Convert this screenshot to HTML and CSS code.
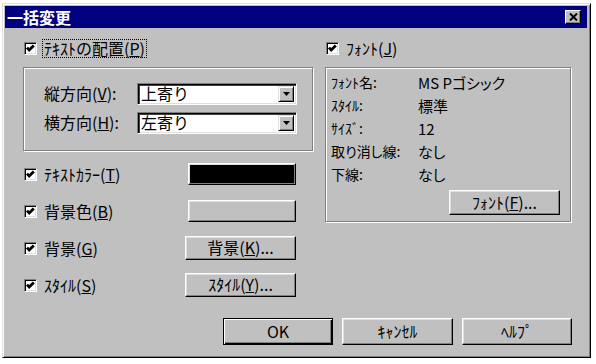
FILE: index.html
```html
<!DOCTYPE html>
<html lang="ja">
<head>
  <meta charset="UTF-8" />
  <title>一括変更</title>
  <link rel="stylesheet" href="styles.css">
</head>
<body>
  <div class="window">
    <div class="titlebar">
      <span class="title">一括変更</span>
      <span class="close">
        <svg width="9" height="8" viewBox="0 0 9 8"><path d="M1 0.5 L8 7.5 M8 0.5 L1 7.5" stroke="#000" stroke-width="2" fill="none"/></svg>
      </span>
    </div>

    <div class="content">
      <div class="columns">
        <div class="col">
          <div class="check-row">
            <span class="cb"><svg width="11" height="11" viewBox="0 0 11 11"><polyline points="2,4.6 4.2,7 8.8,2.4" stroke="#000" stroke-width="2.8" fill="none"/></svg></span>
            <span class="cb-label focus">ﾃｷｽﾄの配置(<u>P</u>)</span>
          </div>

          <div class="group align-group">
            <div class="field">
              <span class="field-label">縦方向(<u>V</u>):</span>
              <div class="combo">
                <span class="combo-value">上寄り</span>
                <span class="combo-btn"><svg width="7" height="4" viewBox="0 0 7 4"><path d="M0 0 H7 L3.5 4 Z" fill="#000"/></svg></span>
              </div>
            </div>
            <div class="field">
              <span class="field-label">横方向(<u>H</u>):</span>
              <div class="combo">
                <span class="combo-value">左寄り</span>
                <span class="combo-btn"><svg width="7" height="4" viewBox="0 0 7 4"><path d="M0 0 H7 L3.5 4 Z" fill="#000"/></svg></span>
              </div>
            </div>
          </div>

          <div class="opt-row first">
            <div class="check-row">
              <span class="cb"><svg width="11" height="11" viewBox="0 0 11 11"><polyline points="2,4.6 4.2,7 8.8,2.4" stroke="#000" stroke-width="2.8" fill="none"/></svg></span>
              <span class="cb-label">ﾃｷｽﾄｶﾗｰ(<u>T</u>)</span>
            </div>
            <span class="swatch swatch-black"></span>
          </div>
          <div class="opt-row">
            <div class="check-row">
              <span class="cb"><svg width="11" height="11" viewBox="0 0 11 11"><polyline points="2,4.6 4.2,7 8.8,2.4" stroke="#000" stroke-width="2.8" fill="none"/></svg></span>
              <span class="cb-label">背景色(<u>B</u>)</span>
            </div>
            <span class="swatch"></span>
          </div>
          <div class="opt-row">
            <div class="check-row">
              <span class="cb"><svg width="11" height="11" viewBox="0 0 11 11"><polyline points="2,4.6 4.2,7 8.8,2.4" stroke="#000" stroke-width="2.8" fill="none"/></svg></span>
              <span class="cb-label">背景(<u>G</u>)</span>
            </div>
            <button class="btn btn-side">背景(<u>K</u>)...</button>
          </div>
          <div class="opt-row">
            <div class="check-row">
              <span class="cb"><svg width="11" height="11" viewBox="0 0 11 11"><polyline points="2,4.6 4.2,7 8.8,2.4" stroke="#000" stroke-width="2.8" fill="none"/></svg></span>
              <span class="cb-label">ｽﾀｲﾙ(<u>S</u>)</span>
            </div>
            <button class="btn btn-side">ｽﾀｲﾙ(<u>Y</u>)...</button>
          </div>
        </div>

        <div class="col">
          <div class="check-row">
            <span class="cb"><svg width="11" height="11" viewBox="0 0 11 11"><polyline points="2,4.6 4.2,7 8.8,2.4" stroke="#000" stroke-width="2.8" fill="none"/></svg></span>
            <span class="cb-label">ﾌｫﾝﾄ(<u>J</u>)</span>
          </div>

          <div class="group font-group">
            <div class="font-info">
              <span>ﾌｫﾝﾄ名:</span><span class="font-name">MS Pゴシック</span>
              <span>ｽﾀｲﾙ:</span><span class="font-value">標準</span>
              <span>ｻｲｽﾞ:</span><span class="font-value">12</span>
              <span>取り消し線:</span><span class="font-value">なし</span>
              <span>下線:</span><span class="font-value">なし</span>
            </div>
            <div class="font-actions">
              <button class="btn btn-side">ﾌｫﾝﾄ(<u>F</u>)...</button>
            </div>
          </div>
        </div>
      </div>

      <div class="buttons">
        <button class="btn btn-main btn-default">OK</button>
        <button class="btn btn-main btn-wide">ｷｬﾝｾﾙ</button>
        <button class="btn btn-main">ﾍﾙﾌﾟ</button>
      </div>
    </div>
  </div>
</body>
</html>
```

FILE: styles.css
```css
body {
  margin: 0;
  background: #fff;
  font-family: "Noto Sans CJK JP", "Liberation Sans", sans-serif;
  font-size: 16px;
  line-height: 1.2;
  color: #000;
}

u {
  text-underline-offset: 1px;
}

.window {
  box-sizing: border-box;
  width: 589px;
  height: 355px;
  margin: 3px 0 0 2px;
  padding: 2px 3px 3px 2px;
  background: #c0c0c0;
  border: 1px solid;
  border-color: #dfdfdf #000 #000 #dfdfdf;
  box-shadow: inset 1px 1px #fff, inset -1px -1px #808080;
  display: flex;
  flex-direction: column;
}

.titlebar {
  height: 22px;
  background: #000080;
  color: #fff;
  display: flex;
  align-items: center;
  justify-content: space-between;
  padding: 0 6px 0 2px;
}

.title {
  font-size: 16px;
  font-weight: bold;
  line-height: 1;
}

.close {
  box-sizing: border-box;
  width: 16px;
  height: 14px;
  background: #c0c0c0;
  border: 1px solid;
  border-color: #fff #000 #000 #fff;
  box-shadow: inset -1px -1px #808080;
  display: flex;
  align-items: center;
  justify-content: center;
}

.content {
  flex: 1;
  padding: 12px 15px 9px 18px;
  display: flex;
  flex-direction: column;
}

.columns {
  display: grid;
  grid-template-columns: 290px 246px;
  column-gap: 12px;
}

.col {
  display: flex;
  flex-direction: column;
}

.check-row {
  display: flex;
  align-items: center;
  height: 17px;
  padding-left: 1px;
}

.cb {
  box-sizing: border-box;
  width: 13px;
  height: 13px;
  background: #fff;
  border: 1px solid;
  border-color: #808080 #fff #fff #808080;
  box-shadow: inset 1px 1px #000, inset -1px -1px #dfdfdf;
  display: flex;
  flex-shrink: 0;
}

.cb-label {
  margin-left: 7px;
  line-height: 17px;
  white-space: nowrap;
}

.focus {
  margin-left: 6px;
  padding: 0 1px;
  outline: 1px dotted #000;
}

.group {
  margin-top: 10px;
  box-sizing: border-box;
  border: 1px solid #808080;
  box-shadow: inset 1px 1px #fff, 1px 1px #fff;
}

.align-group {
  height: 84px;
  padding: 15px 0 0 20px;
  display: flex;
  flex-direction: column;
  gap: 7px;
}

.field {
  display: flex;
  align-items: center;
}

.field-label {
  width: 93px;
  white-space: nowrap;
}

.combo {
  box-sizing: border-box;
  width: 160px;
  height: 22px;
  padding: 2px;
  background: #fff;
  border: 1px solid;
  border-color: #808080 #fff #fff #808080;
  box-shadow: inset 1px 1px #000, inset 2px 2px #404040, inset -1px -1px #dfdfdf;
  display: flex;
  align-items: center;
  justify-content: space-between;
}

.combo-value {
  padding-left: 1px;
}

.combo-btn {
  box-sizing: border-box;
  width: 16px;
  height: 16px;
  background: #c0c0c0;
  border: 1px solid;
  border-color: #dfdfdf #000 #000 #dfdfdf;
  box-shadow: inset 1px 1px #fff, inset -1px -1px #808080;
  display: flex;
  align-items: center;
  justify-content: center;
}

.opt-row {
  height: 24px;
  margin-top: 13px;
  padding-right: 17px;
  display: flex;
  align-items: center;
  justify-content: space-between;
}

.opt-row.first {
  margin-top: 11px;
}

.swatch {
  box-sizing: border-box;
  width: 108px;
  height: 22px;
  background: #c0c0c0;
  border: 1px solid;
  border-color: #fff #000 #000 #fff;
  box-shadow: inset -1px -1px #808080, inset 1px 1px #dfdfdf;
}

.swatch-black {
  background: #000;
  box-shadow: inset -1px -1px #808080, inset 1px 1px #dfdfdf, inset 2px 2px #000;
}

.btn {
  box-sizing: border-box;
  margin: 0;
  padding: 0;
  background: #c0c0c0;
  border: 1px solid;
  border-color: #fff #000 #000 #fff;
  box-shadow: inset -1px -1px #808080, inset 1px 1px #dfdfdf;
  font: inherit;
  color: #000;
  white-space: nowrap;
}

.btn-side {
  width: 111px;
  height: 24px;
}

.font-group {
  height: 155px;
  padding: 3px 10px 6px 5px;
}

.font-info {
  display: grid;
  grid-template-columns: 87px 1fr;
  grid-auto-rows: 23px;
  align-items: center;
  white-space: nowrap;
  font-size: 14px;
  font-feature-settings: "palt";
}

.font-name {
  font-size: 15px;
}

.font-value {
  font-size: 15px;
}

.font-actions {
  margin-top: 4px;
  display: flex;
  justify-content: flex-end;
}

.font-actions .btn {
  height: 25px;
}

.buttons {
  margin-top: auto;
  display: flex;
  justify-content: flex-end;
  gap: 9px;
}

.btn-main {
  width: 110px;
  height: 27px;
}

.btn-wide {
  width: 111px;
}

.btn-default {
  border-color: #000;
  box-shadow: inset 1px 1px #fff, inset -1px -1px #000, inset -2px -2px #808080;
}
```
